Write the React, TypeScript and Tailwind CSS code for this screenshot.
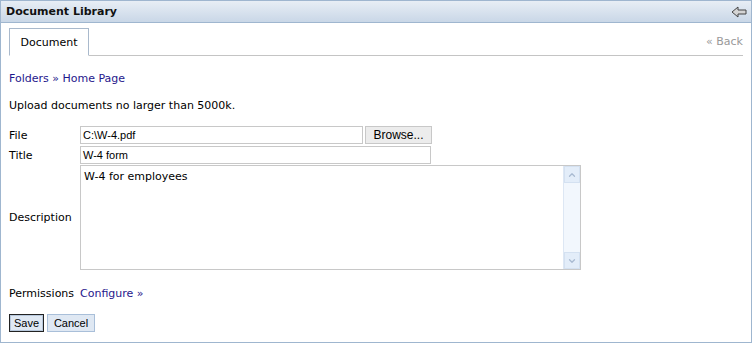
import { ChevronUp, ChevronDown } from "lucide-react";

const ui = { fontFamily: '"DejaVu Sans", Verdana, sans-serif' };
const field = { fontFamily: '"Liberation Sans", Arial, sans-serif' };

export default function App() {
  return (
    <div
      className="flex h-[343px] w-[752px] flex-col border border-[#9fb6cf] bg-white text-[11px] leading-[15px] text-black"
      style={ui}>
      {/* header */}
      <div className="flex h-[22px] items-center justify-between border-b border-[#9fb6cf] bg-gradient-to-b from-[#e8eef5] to-[#c9d7e7] pl-[5px] pr-[4px]">
        <span className="text-[11px] font-bold text-[#111]">Document Library</span>
        <svg width="16" height="12" viewBox="0 0 16 12">
          <path
            d="M1 6 L7 1 L7 4 L15 4 L15 8 L7 8 L7 11 Z"
            fill="#d4d4d4"
            stroke="#444"
            strokeWidth="1"
            strokeLinejoin="round"
          />
        </svg>
      </div>

      <div className="flex flex-col px-[8px]">
        {/* tabs */}
        <div className="mt-[5px] flex items-end border-b border-[#c4c4c4]">
          <div className="-mb-px flex h-[28px] w-[80px] items-center justify-center border border-b-white border-[#a9b9cc] bg-white">
            Document
          </div>
          <span className="ml-auto mb-[6px] text-[#999]">« Back</span>
        </div>

        {/* breadcrumb */}
        <div className="mt-[15px] text-[#1f178c]">Folders » Home Page</div>
        <div className="mt-[12px]">Upload documents no larger than 5000k.</div>

        {/* form */}
        <div className="mt-[13px] grid grid-cols-[71px_1fr]">
          <span className="self-center">File</span>
          <div className="flex gap-[2px]">
            <div
              className="flex h-[18px] w-[283px] items-center border border-[#c8c8c8] px-[2px] text-[11px]"
              style={field}>
              C:\W-4.pdf
            </div>
            <button
              className="flex h-[18px] w-[67px] items-center justify-center border border-[#c8c8c8] bg-[#ececec] text-[12px]"
              style={field}>
              Browse...
            </button>
          </div>

          <span className="mt-[2px] self-center">Title</span>
          <div
            className="mt-[2px] flex h-[18px] w-[351px] items-center border border-[#c8c8c8] px-[2px] text-[11px]"
            style={field}>
            W-4 form
          </div>

          <span className="mt-[1px] self-center">Description</span>
          <div className="mt-[1px] flex h-[105px] w-[501px] border border-[#c8c8c8]">
            <div className="flex-1 px-[3px] pt-[3px] text-[11px]">W-4 for employees</div>
            <div className="flex w-[17px] flex-col border-l border-[#dde7f4] bg-[#f2f7fd]">
              <div className="flex h-[17px] items-center justify-center border border-[#d4e1f1] bg-[#e3edf9]">
                <ChevronUp size={10} strokeWidth={3} color="#a9bad1" />
              </div>
              <div className="flex-1" />
              <div className="flex h-[17px] items-center justify-center border border-[#d4e1f1] bg-[#e3edf9]">
                <ChevronDown size={10} strokeWidth={3} color="#a9bad1" />
              </div>
            </div>
          </div>
        </div>

        <div className="mt-[16px] flex">
          <span className="w-[71px]">Permissions</span>
          <span className="text-[#1f178c]">Configure »</span>
        </div>

        {/* buttons */}
        <div className="mt-[13px] flex gap-[3px] text-[11px]" style={field}>
          <button className="h-[18px] w-[35px] border border-[#222] bg-[#dfe8f3] shadow-[inset_0_0_0_1px_#b7c8dc]">
            Save
          </button>
          <button className="h-[18px] w-[48px] border border-[#a9bfd9] bg-[#dfe8f3]">Cancel</button>
        </div>
      </div>
    </div>
  );
}
